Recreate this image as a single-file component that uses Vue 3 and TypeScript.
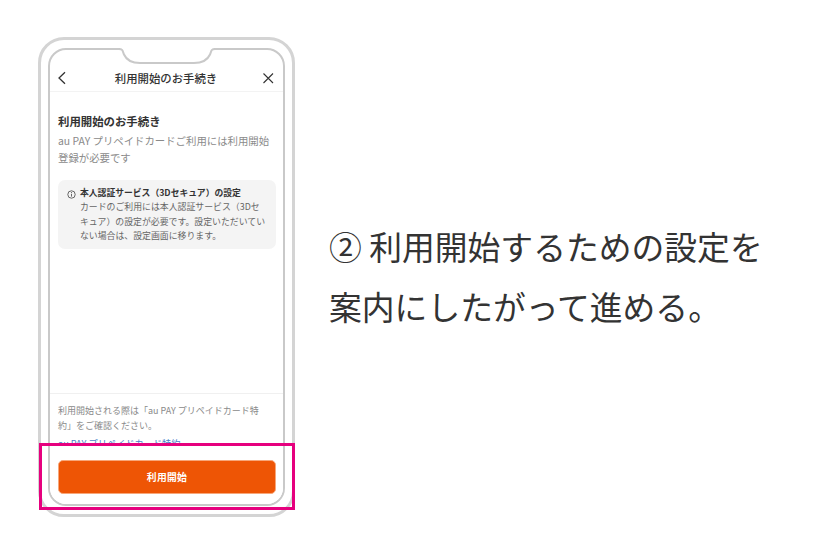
<template>
  <div class="page">
    <div class="phone">
      <div class="screen">
        <header class="nav">
          <svg class="nav-icon" width="12" height="14" viewBox="0 0 12 14">
            <path d="M9 1.2 L3 7 L9 12.8" fill="none" stroke="#333" stroke-width="1.3" />
          </svg>
          <span class="nav-title">利用開始のお手続き</span>
          <svg class="nav-icon" width="12" height="14" viewBox="0 0 12 14">
            <path d="M1.5 2.5 L11 12 M11 2.5 L1.5 12" fill="none" stroke="#333" stroke-width="1.1" />
          </svg>
        </header>
        <main class="body">
          <h2 class="heading">利用開始のお手続き</h2>
          <p class="lead">au PAY プリペイドカードご利用には利用開始登録が必要です</p>
          <div class="info">
            <svg class="info-icon" width="9" height="9" viewBox="0 0 9 9">
              <circle cx="4.5" cy="4.5" r="3.7" fill="none" stroke="#444" stroke-width="0.8" />
              <path d="M4.5 3.8 V6.6" stroke="#444" stroke-width="0.8" />
              <circle cx="4.5" cy="2.6" r="0.5" fill="#444" />
            </svg>
            <div>
              <div class="info-title">本人認証サービス（3Dセキュア）の設定</div>
              <p class="info-text">カードのご利用には本人認証サービス（3Dセキュア）の設定が必要です。設定いただいていない場合は、設定画面に移ります。</p>
            </div>
          </div>
        </main>
        <footer class="foot">
          <p class="note">利用開始される際は「au PAY プリペイドカード特約」をご確認ください。</p>
          <a class="link">au PAY プリペイドカード特約</a>
          <div class="action">
            <button class="start">利用開始</button>
          </div>
        </footer>
      </div>
      <svg class="notch" width="104" height="18" viewBox="0 0 104 18">
        <rect x="5" y="0" width="94" height="3" fill="#fff" />
        <path d="M0 1 H4 C8 1 7.5 3 9 6.5 C11.5 12 17 15 25 15 H79 C87 15 92.5 12 95 6.5 C96.5 3 96 1 100 1 H104" fill="#fff" stroke="#c9c9c9" stroke-width="2" />
      </svg>
      <div class="highlight"></div>
    </div>
    <div class="caption">
      <p>② 利用開始するための設定を</p>
      <p>案内にしたがって進める。</p>
    </div>
  </div>
</template>

<script setup lang="ts">
</script>

<style>
html,
body {
  margin: 0;
  background: #fff;
}
</style>

<style scoped>
.page {
  width: 820px;
  height: 553px;
  display: flex;
  align-items: flex-start;
  padding: 37px 0 0 38px;
  box-sizing: border-box;
  overflow: hidden;
  font-family: "Noto Sans CJK JP", "Noto Sans", sans-serif;
  color: #333;
}

.phone {
  position: relative;
  flex: none;
  width: 257px;
  height: 480px;
  box-sizing: border-box;
  padding: 8px 7px;
  border: 3px solid #d4d4d4;
  border-radius: 26px;
  background: #fff;
}

.screen {
  height: 100%;
  box-sizing: border-box;
  display: flex;
  flex-direction: column;
  border: 2px solid #c9c9c9;
  border-radius: 18px;
  overflow: hidden;
  background: #fff;
}

.notch {
  position: absolute;
  top: 8px;
  left: 74px;
}

.nav {
  flex: none;
  height: 42px;
  padding: 14px 9px 0 6px;
  box-sizing: border-box;
  display: flex;
  justify-content: space-between;
  align-items: center;
  border-bottom: 1px solid #f3f3f3;
}

.nav-title {
  position: relative;
  left: 1px;
  font-size: 11.4px;
  font-weight: 500;
  line-height: 16px;
}

.nav-icon {
  flex: none;
}

.body {
  flex: 1;
  padding: 21px 7px 0 8px;
}

.heading {
  margin: 0;
  font-size: 11.4px;
  font-weight: 700;
  line-height: 17px;
}

.lead {
  margin: 3px 0 0;
  font-size: 10.4px;
  line-height: 16.5px;
  color: #8a8a8a;
}

.info {
  display: flex;
  gap: 4px;
  margin-top: 14px;
  padding: 6px 8px 5px 9px;
  border-radius: 7px;
  background: #f4f4f4;
}

.info-icon {
  flex: none;
  margin-top: 4px;
}

.info-title {
  font-size: 8.8px;
  font-weight: 700;
  line-height: 14px;
}

.info-text {
  margin: 0;
  font-size: 8.9px;
  line-height: 14.5px;
  color: #666;
}

.foot {
  position: relative;
  flex: none;
  height: 111px;
  padding: 9px 8px 0;
  box-sizing: border-box;
  border-top: 1px solid #f0f0f0;
  overflow: hidden;
}

.note {
  margin: 0;
  padding-right: 12px;
  font-size: 9px;
  line-height: 15px;
  color: #8a8a8a;
}

.link {
  display: block;
  margin-top: 3px;
  font-size: 9.2px;
  line-height: 14px;
  color: #4a7fc9;
  text-decoration: underline;
}

.action {
  position: absolute;
  left: 0;
  right: 0;
  top: 52px;
  bottom: 0;
  padding: 14px 7px 0 8px;
  background: #fff;
}

.start {
  display: block;
  width: 100%;
  height: 34px;
  border: 1px solid #f7a77a;
  border-radius: 5px;
  background: #ee5505;
  color: #fff;
  font-family: inherit;
  font-size: 9.8px;
  font-weight: 700;
  letter-spacing: 0.3px;
}

.highlight {
  position: absolute;
  left: -2px;
  top: 403px;
  width: 256px;
  height: 67px;
  box-sizing: border-box;
  border: 3px solid #e6007e;
}

.caption {
  margin: 179px 0 0 34px;
  font-size: 32.8px;
  line-height: 60px;
  white-space: nowrap;
  color: #333;
}

.caption p {
  margin: 0;
}
</style>
